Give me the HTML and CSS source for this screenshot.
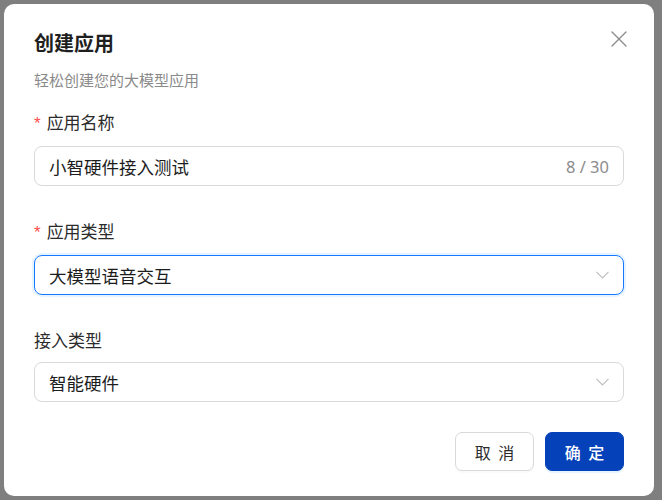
FILE: index.html
```html
<!DOCTYPE html>
<html lang="zh-CN">
<head>
<meta charset="utf-8">
<title>创建应用</title>
<link rel="stylesheet" href="styles.css">
</head>
<body>
<div class="overlay">
  <div class="dialog">
    <div class="header">
      <h1 class="title">创建应用</h1>
      <button class="close" aria-label="关闭">
        <svg width="16" height="16" viewBox="0 0 16 16"><path d="M1 1 L15 15 M15 1 L1 15" stroke="#8c8c8c" stroke-width="1.4" fill="none" stroke-linecap="round"/></svg>
      </button>
    </div>
    <p class="subtitle">轻松创建您的大模型应用</p>

    <div class="item">
      <label class="label"><span class="req">*</span>应用名称</label>
      <div class="field">
        <span class="value">小智硬件接入测试</span>
        <span class="count">8 / 30</span>
      </div>
    </div>

    <div class="item">
      <label class="label"><span class="req">*</span>应用类型</label>
      <div class="field focused">
        <span class="value">大模型语音交互</span>
        <svg class="chev" width="13" height="8" viewBox="0 0 13 8"><path d="M0.5 0.8 L6.5 7 L12.5 0.8" stroke="#bfbfbf" stroke-width="1.2" fill="none"/></svg>
      </div>
    </div>

    <div class="item last">
      <label class="label">接入类型</label>
      <div class="field">
        <span class="value">智能硬件</span>
        <svg class="chev" width="13" height="8" viewBox="0 0 13 8"><path d="M0.5 0.8 L6.5 7 L12.5 0.8" stroke="#bfbfbf" stroke-width="1.2" fill="none"/></svg>
      </div>
    </div>

    <div class="footer">
      <button class="btn">取 消</button>
      <button class="btn primary">确 定</button>
    </div>
  </div>
</div>
</body>
</html>
```

FILE: styles.css
```css
* { box-sizing: border-box; }
html, body { margin: 0; padding: 0; }
body {
  width: 662px;
  height: 500px;
  background: #7f7f7f;
  font-family: "Noto Sans CJK SC", "Noto Sans", sans-serif;
  overflow: hidden;
}
.overlay {
  padding: 4px;
}
.dialog {
  width: 650px;
  height: 492px;
  background: #ffffff;
  border-radius: 10px;
  padding: 25px 30px 0 30px;
}
.header {
  display: flex;
  justify-content: space-between;
  align-items: flex-start;
}
.title {
  margin: 0;
  font-size: 20px;
  line-height: 28px;
  font-weight: 700;
  color: #1f1f1f;
}
.close {
  border: none;
  background: none;
  padding: 0;
  margin: 2px -3px 0 0;
  width: 16px;
  height: 16px;
  display: flex;
}
.subtitle {
  margin: 12px 0 0 0;
  font-size: 15px;
  line-height: 22px;
  color: #8a8a8a;
}
.item {
  margin-top: 19px;
}
.item + .item {
  margin-top: 33px;
}
.item.last {
  margin-top: 33px;
}
.label {
  display: block;
  font-size: 17px;
  line-height: 24px;
  color: #2b2b2b;
  margin-bottom: 10px;
}
.req {
  color: #ff4d4f;
  margin-right: 6px;
  font-family: "Liberation Sans", sans-serif;
  font-size: 17px;
}
.field {
  height: 40px;
  border: 1px solid #d9d9d9;
  border-radius: 8px;
  display: flex;
  align-items: center;
  justify-content: space-between;
  padding: 0 14px 0 14px;
}
.field.focused {
  border-color: #1677ff;
  box-shadow: 0 0 0 2px rgba(5, 145, 255, 0.1);
}
.value {
  font-size: 17.5px;
  color: #1c1c1c;
}
.count {
  font-size: 16.5px;
  color: #8c8c8c;
  font-family: "Noto Sans", sans-serif;
}
.chev {
  display: block;
}
.footer {
  margin-top: 30px;
  display: flex;
  justify-content: flex-end;
  gap: 11px;
}
.btn {
  width: 79px;
  height: 39px;
  border: 1px solid #d9d9d9;
  border-radius: 7px;
  background: #ffffff;
  font-family: "Noto Sans CJK SC", sans-serif;
  font-size: 16px;
  word-spacing: 4px;
  color: #2b2b2b;
  padding: 0;
  box-shadow: 0 2px 0 rgba(0, 0, 0, 0.02);
}
.btn.primary {
  background: #0541b9;
  border-color: #0541b9;
  color: #ffffff;
  font-weight: 500;
  box-shadow: 0 2px 0 rgba(5, 145, 255, 0.1);
}
```
